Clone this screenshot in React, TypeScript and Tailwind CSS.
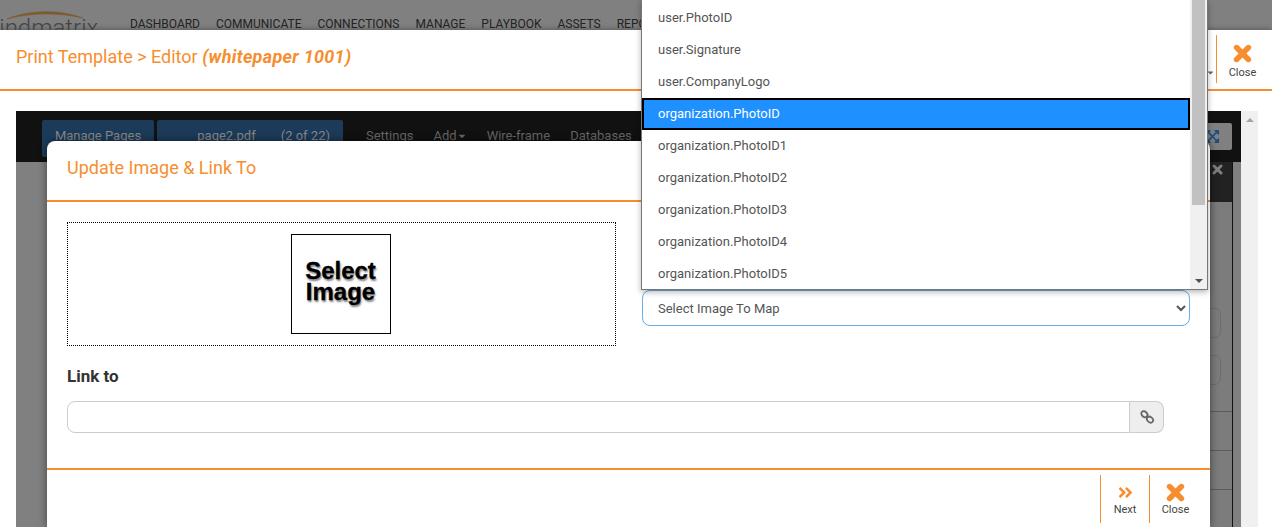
import React from "react";
import { FaAngleDoubleRight, FaExpandArrowsAlt, FaCaretDown } from "react-icons/fa";

const navItems = ["DASHBOARD", "COMMUNICATE", "CONNECTIONS", "MANAGE", "PLAYBOOK", "ASSETS", "REPORTS"];
const options = [
  "user.PhotoID",
  "user.Signature",
  "user.CompanyLogo",
  "organization.PhotoID",
  "organization.PhotoID1",
  "organization.PhotoID2",
  "organization.PhotoID3",
  "organization.PhotoID4",
  "organization.PhotoID5",
];

function CloseIcon() {
  return (
    <svg width="19" height="19" viewBox="0 0 19 19" fill="none" stroke="#f68e2f" strokeWidth="5.6" strokeLinecap="round">
      <path d="M3.6 3.6 L15.4 15.4 M15.4 3.6 L3.6 15.4" />
    </svg>
  );
}

function ActionButton({
  label,
  icon,
  width,
  boxClass,
}: {
  label: string;
  icon: React.ReactNode;
  width: string;
  boxClass: string;
}) {
  return (
    <div className={`flex flex-col items-center border-l border-[#f68e2f] ${width} ${boxClass}`}>
      {icon}
      <div className="text-[11px] leading-[14px] text-[#444]">{label}</div>
    </div>
  );
}

function LinkIcon() {
  return (
    <svg width="16" height="16" viewBox="0 0 16 16" fill="none" stroke="#666" strokeWidth="1.8">
      <ellipse cx="5.4" cy="5.2" rx="3.4" ry="2.6" transform="rotate(40 5.4 5.2)" />
      <ellipse cx="11" cy="10.6" rx="3.4" ry="2.6" transform="rotate(40 11 10.6)" />
    </svg>
  );
}

function Tick() {
  return (
    <svg className="ml-[1px] mt-[13px]" width="7" height="7" viewBox="0 0 7 7" fill="none" stroke="#333" strokeWidth="1.2">
      <path d="M0.5 6 L6 1" />
    </svg>
  );
}

export default function App() {
  return (
    <div className="relative h-[527px] w-[1272px] overflow-hidden bg-[#808080] font-['Roboto',sans-serif]">
      {/* page behind the dialogs */}
      <div className="flex h-[30px] overflow-hidden">
        <div className="relative w-[130px] shrink-0 overflow-hidden">
          <svg className="absolute left-[6px] top-[9px]" width="78" height="11" viewBox="0 0 78 11">
            <path d="M1 10 C 20 2 50 -1 77 9 C 52 3 22 4 1 10 Z" fill="#7d5b2c" stroke="#7d5b2c" strokeWidth="0.6" />
          </svg>
          <div className="absolute left-[-22px] top-[13px] text-[24px] font-light leading-[30px] text-[#444]">mindmatrix</div>
        </div>
        <div className="flex h-[30px] gap-[16px] pt-[17px] text-[12px] leading-[14px] text-[#222]">
          {navItems.map((n) => (
            <span key={n}>{n}</span>
          ))}
        </div>
      </div>

      {/* first dialog */}
      <div className="flex h-[497px] flex-col bg-white shadow-[0_0_6px_rgba(0,0,0,0.4)]">
        <div className="flex h-[61px] shrink-0 items-start justify-between border-b-2 border-[#f68e2f] pl-[16px]">
          <div className="pt-[15px] text-[18px] leading-[24px] text-[#f68e2f]">
            Print Template &gt; Editor <b className="font-bold italic tracking-[0.3px]">(whitepaper 1001)</b>
          </div>
          <div className="flex items-start pr-[4px] pt-[5px]">
            <FaCaretDown className="mr-[1px] mt-[33px] text-[9px] text-[#666]" />
            <ActionButton
              label="Close"
              width="w-[52px]"
              boxClass="h-[48px] pt-[9px]"
              icon={<span className="mb-[3px] block h-[19px]"><CloseIcon /></span>}
            />
          </div>
        </div>

        <div className="flex flex-1 pl-[16px] pr-[14px] pt-[20px]">
          {/* editor */}
          <div className="flex flex-1 flex-col bg-[#808080]">
            <div className="flex h-[51px] shrink-0 bg-[#111] pl-[26px] pt-[9px] text-[13px] leading-[20px] text-[#666]">
              <div className="flex h-[37px] w-[112px] items-center justify-center rounded-[2px] bg-[#1c3b5a] pb-[6px] text-[#888]">Manage Pages</div>
              <div className="ml-[3px] flex h-[37px] w-[186px] items-center justify-end gap-[25px] rounded-[2px] bg-[#1c3b5a] pb-[6px] pr-[13px] text-[#888]">
                <span>page2.pdf</span>
                <span>(2 of 22)</span>
              </div>
              <div className="ml-[23px] flex h-[31px] items-center gap-[20px]">
                <span>Settings</span>
                <span className="flex items-center">Add<FaCaretDown className="text-[10px]" /></span>
                <span>Wire-frame</span>
                <span>Databases</span>
              </div>
              <div className="ml-auto mr-[9px] mt-[3px] flex h-[27px] w-[40px] items-center justify-center rounded-[2px] bg-[#808080] text-[#1c4f80]">
                <FaExpandArrowsAlt className="text-[15px]" />
              </div>
            </div>
            <div className="flex flex-1 justify-end pr-[8px]">
              <div className="flex w-[32px] flex-col border-r border-[#111] bg-[#222]">
                <div className="flex h-[40px] justify-end pr-[9px] pt-[1px]">
                  <svg className="mt-[1px]" width="11" height="11" viewBox="0 0 11 11" fill="none" stroke="#7f7f7f" strokeWidth="3" strokeLinecap="round">
                    <path d="M2 2 L9 9 M9 2 L2 9" />
                  </svg>
                </div>
                <div className="flex-1 bg-[#7c7c7c]">
                  <div className="mt-[106px] h-[30px] w-[20px] rounded-r-[6px] border border-[#6e6e6e]" />
                  <div className="mt-[17px] h-[30px] w-[20px] rounded-r-[6px] border border-[#6e6e6e]" />
                  <div className="mt-[26px] flex h-[39px] border-t border-[#5c5c5c]"><Tick /></div>
                  <div className="flex h-[39px] border-t border-[#5c5c5c]"><Tick /></div>
                  <div className="flex h-[39px] border-t border-[#5c5c5c]"><Tick /></div>
                </div>
              </div>
            </div>
          </div>
          {/* editor's scroll track */}
          <div className="flex w-[17px] shrink-0 justify-center bg-[#f0f0f0] pt-[7px]">
            <div className="h-0 w-0 border-x-[4px] border-b-[4px] border-x-transparent border-b-[#a3a3a3]" />
          </div>
        </div>
      </div>

      {/* second dialog */}
      <div className="absolute left-[47px] top-[141px] flex h-[386px] w-[1163px] flex-col rounded-t-[8px] bg-white shadow-[0_0_8px_rgba(0,0,0,0.5)]">
        <div className="flex h-[61px] shrink-0 border-b-2 border-[#f68e2f] pl-[20px] pt-[15px] text-[18px] leading-[24px] text-[#f68e2f]">
          Update Image &amp; Link To
        </div>
        <div className="h-[266px] shrink-0 px-[20px] pt-[20px]">
          <div className="flex gap-[26px]">
            <div className="flex h-[124px] w-[549px] items-center justify-center border border-dotted border-black">
              <div className="mr-[2px] flex h-[100px] w-[100px] items-center justify-center border border-black bg-white pb-[6px] text-center font-['Liberation_Sans',sans-serif] text-[24px] font-bold leading-[21px] text-black [-webkit-text-stroke:0.3px_black] [text-shadow:1px_2px_2px_rgba(0,0,0,0.5)]">
                Select<br />Image
              </div>
            </div>
            <div className="flex h-[124px] flex-1 items-end pb-[20px]">
              <select className="h-[36px] w-[548px] rounded-[8px] border border-[#66afe9] bg-white pl-[11px] pr-[2px] text-[13px] text-[#555]">
                <option>Select Image To Map</option>
              </select>
            </div>
          </div>
          <div className="mt-[20px] text-[17px] font-bold leading-[20px] text-[#333]">Link to</div>
          <div className="mt-[15px] flex h-[32px] w-[1097px]">
            <div className="flex-1 rounded-l-[8px] border border-[#ccc] bg-white" />
            <div className="flex w-[34px] items-center justify-center rounded-r-[8px] border border-l-0 border-[#ccc] bg-[#eee]">
              <LinkIcon />
            </div>
          </div>
        </div>
        <div className="flex flex-1 justify-end border-t-2 border-[#f68e2f] pr-[9px] pt-[5px]">
          <div className="flex h-[48px]">
            <ActionButton
              label="Next"
              width="w-[49px]"
              boxClass="pt-[9px]"
              icon={<FaAngleDoubleRight className="mb-[2px] text-[17px] text-[#f68e2f]" />}
            />
            <ActionButton
              label="Close"
              width="w-[52px]"
              boxClass="pt-[8px]"
              icon={<span className="mb-[1px] block h-[19px]"><CloseIcon /></span>}
            />
          </div>
        </div>
      </div>

      {/* open select list */}
      <div className="absolute left-[641px] top-0 flex h-[290px] w-[567px] border border-t-0 border-[#767676] bg-white shadow-[0_2px_6px_rgba(0,0,0,0.3)]">
        <div className="flex-1 pt-[2px]">
          {options.map((o) => (
            <div
              key={o}
              className={
                o === "organization.PhotoID"
                  ? "flex h-[32px] items-center border-2 border-black bg-[#1e90ff] pl-[14px] text-[13px] text-white"
                  : "flex h-[32px] items-center pl-[16px] text-[13px] text-[#555]"
              }
            >
              {o}
            </div>
          ))}
        </div>
        <div className="relative flex w-[17px] flex-col bg-[#f0f0f0]">
          <div className="ml-[2px] mr-[2px] h-[205px] bg-[#c1c1c1]" />
          <div className="absolute bottom-[6px] left-[5px] h-0 w-0 border-x-[4px] border-t-[4px] border-x-transparent border-t-[#505050]" />
        </div>
      </div>
    </div>
  );
}
